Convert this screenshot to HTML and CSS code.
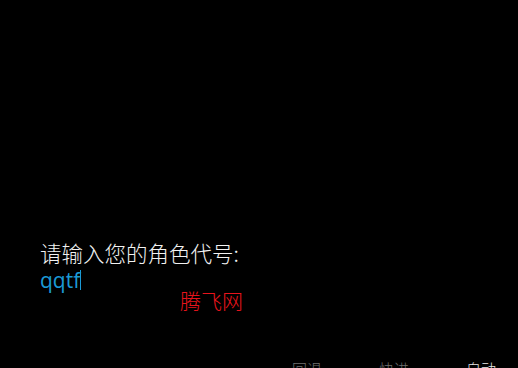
FILE: index.html
```html
<!DOCTYPE html>
<html lang="zh-CN">
<head>
    <meta charset="UTF-8">
    <meta name="viewport" content="width=device-width, initial-scale=1.0">
    <title>腾飞网</title>
    <link rel="stylesheet" href="styles.css">
</head>
<body>
    <div class="screen">
        <div class="login">
            <div class="prompt">请输入您的角色代号:</div>
            <div class="input-line"><span class="code">qqtf</span><span class="caret"></span></div>
            <div class="brand">腾飞网</div>
        </div>
        <div class="toolbar">
            <span class="tool">回退</span>
            <span class="tool">快进</span>
            <span class="tool active">自动</span>
        </div>
    </div>
</body>
</html>
```

FILE: styles.css
```css
html, body { margin: 0; padding: 0; background: #000; }
body { font-family: "Noto Sans CJK SC", "Noto Sans", sans-serif; color: #fff; }
.screen { width: 518px; height: 368px; overflow: hidden; display: flex; flex-direction: column; }
.login { margin-top: 239px; padding-left: 40px; }
.prompt { font-size: 21.5px; line-height: 28px; color: #f2f2f2; font-weight: 300; }
.input-line { display: flex; align-items: center; height: 24px; margin-top: 1px; }
.code { font-family: "Open Sans", "Noto Sans", sans-serif; font-size: 21px; line-height: 24px; color: #1b9ad6; }
.caret { width: 1px; height: 20px; background: #1b9ad6; }
.brand { margin-left: 140px; margin-top: -4px; font-size: 21px; line-height: 24px; color: #e8141c; font-weight: 300; }
.toolbar { display: flex; justify-content: flex-end; gap: 57px; padding-right: 22px; margin-top: 47px; }
.tool { font-size: 15px; line-height: 20px; color: #6f6f6f; font-weight: 300; }
.tool.active { color: #e6e6e6; }
```
